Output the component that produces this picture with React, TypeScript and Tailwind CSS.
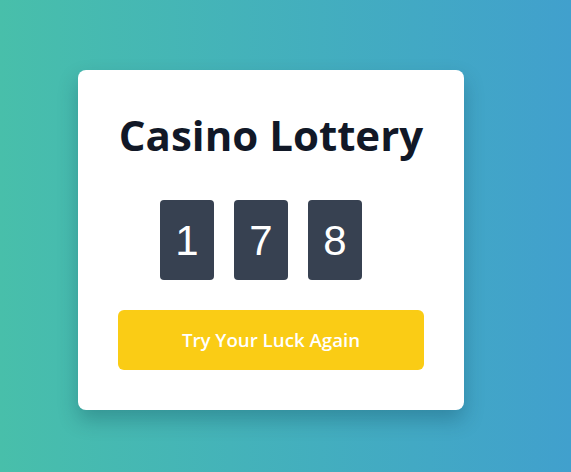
const digits = [1, 7, 8];

export default function App() {
  return (
    <div className="min-h-screen w-full bg-linear-to-r from-[#48bfaa] to-[#41a0cd] pl-[78px] pt-[70px] font-['Open_Sans',sans-serif]">
      <div className="w-[386px] rounded-lg bg-white px-10 pb-10 pt-10 shadow-[0_10px_20px_rgba(0,40,60,0.25)]">
        <h1 className="text-center text-[42px] font-bold leading-[50px] text-[#111827]">
          Casino Lottery
        </h1>
        <div className="mt-10 flex justify-center">
          {digits.map((d, i) => (
            <div
              key={i}
              className="mr-5 flex h-20 w-[54px] items-center justify-center rounded bg-[#374151] font-['Liberation_Sans',sans-serif] text-[42px] text-white"
            >
              {d}
            </div>
          ))}
        </div>
        <button className="mt-[30px] flex h-[60px] w-full items-center justify-center rounded-md bg-[#facc15] text-[18.7px] font-semibold text-white">
          Try Your Luck Again
        </button>
      </div>
    </div>
  );
}
